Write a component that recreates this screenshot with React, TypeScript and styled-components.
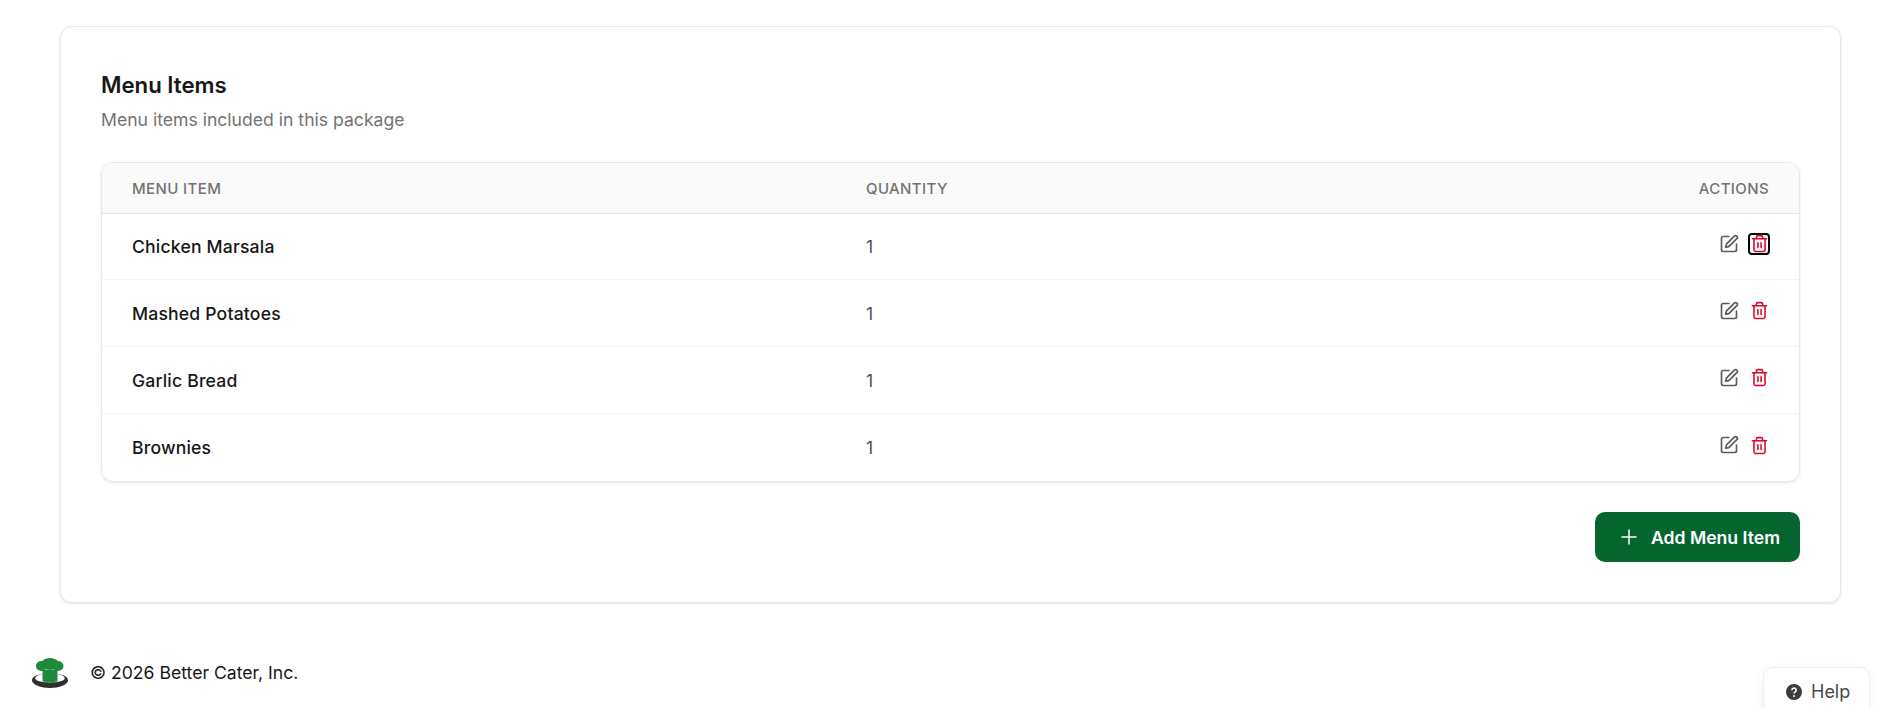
import { Plus, SquarePen, Trash2 } from "lucide-react";
import styled, { createGlobalStyle } from "styled-components";

const GlobalStyle = createGlobalStyle`
  html, body {
    margin: 0;
    height: 100%;
    overflow: hidden;
    background: #ffffff;
    font-family: Inter, "Liberation Sans", sans-serif;
  }
`;

const items = ["Chicken Marsala", "Mashed Potatoes", "Garlic Bread", "Brownies"];

const App = () => {
  return (
    <Page>
      <GlobalStyle />
      <Card>
        <Title>Menu Items</Title>
        <Subtitle>Menu items included in this package</Subtitle>
        <TableBox>
          <HeaderRow>
            <HeadCell>Menu Item</HeadCell>
            <HeadCell>Quantity</HeadCell>
            <HeadCell $right>Actions</HeadCell>
          </HeaderRow>
          {items.map((name, i) => (
            <Row key={name}>
              <NameCell>{name}</NameCell>
              <QtyCell>1</QtyCell>
              <Actions>
                <IconButton $color="#5c5c5c">
                  <SquarePen size={20} strokeWidth={2} />
                </IconButton>
                <IconButton $color="#dc0a2a" $focused={i === 0}>
                  <Trash2 size={19} strokeWidth={2} />
                </IconButton>
              </Actions>
            </Row>
          ))}
        </TableBox>
        <CardFooter>
          <AddButton>
            <Plus size={24} strokeWidth={1.5} />
            Add Menu Item
          </AddButton>
        </CardFooter>
      </Card>
      <Footer>
        <Logo />
        <Copy>© 2026 Better Cater, Inc.</Copy>
      </Footer>
      <Help>
        <HelpIcon viewBox="0 0 16 16">
          <circle cx="8" cy="8" r="8" fill="#3d3d3d" />
          <path d="M5.9 6.2a2.1 2.1 0 1 1 3.3 1.7c-.7.5-1.2.9-1.2 1.7" fill="none" stroke="#fff" strokeWidth="1.6" />
          <circle cx="8" cy="12" r="1" fill="#fff" />
        </HelpIcon>
        Help
      </Help>
    </Page>
  );
};

const Logo = () => (
  <LogoSvg viewBox="0 0 38 30">
    <path d="M1 22.500C1 18.500 6 16.500 12 16 6 17 3.500 19 4.500 21 6 25.500 32 25.500 33.500 21 34.500 19 32 17 26 16 32 16.500 37 18.500 37 22.500 37 26.500 28 30 19 30 10 30 1 26.500 1 22.500Z" fill="#303030" />
    <path d="M11.500 12H26.500V23.500C22 24.500 16 24.500 11.500 23.500Z" fill="#1f8a3d" />
    <ellipse cx="19" cy="6" rx="9" ry="6" fill="#1f8a3d" />
    <ellipse cx="10.500" cy="8" rx="5.500" ry="5" fill="#1f8a3d" />
    <ellipse cx="27" cy="8" rx="5.500" ry="5" fill="#1f8a3d" />
  </LogoSvg>
);

export default App;

const Page = styled.div`
  position: relative;
  height: 708px;
  box-sizing: border-box;
  padding: 26px 60px 0;
  overflow: hidden;
`;

const Card = styled.section`
  box-sizing: border-box;
  height: 577px;
  padding: 40px;
  background: #ffffff;
  border: 1px solid #e8e8e8;
  border-radius: 12px;
  box-shadow: 0 1px 3px rgba(0, 0, 0, 0.1);
`;

const Title = styled.h2`
  margin: 0;
  font-size: 22.2px;
  line-height: 36px;
  font-weight: 600;
  color: #171717;
`;

const Subtitle = styled.p`
  margin: 5px 0 0;
  font-size: 17.6px;
  line-height: 24px;
  color: #737373;
`;

const TableBox = styled.div`
  margin-top: 30px;
  border: 1px solid #e8e8e8;
  border-radius: 12px;
  overflow: hidden;
  box-shadow: 0 1px 3px rgba(0, 0, 0, 0.1);
`;

const HeaderRow = styled.div`
  display: grid;
  grid-template-columns: 734px 1fr auto;
  align-items: center;
  height: 50px;
  margin-bottom: -1px;
  padding: 0 30px;
  background: #fafafa;
  border-bottom: 1px solid #e5e5e5;
`;

const HeadCell = styled.div<{ $right?: boolean }>`
  font-size: 15px;
  font-weight: 450;
  letter-spacing: 0.38px;
  text-transform: uppercase;
  color: #737373;
  text-align: ${(p) => (p.$right ? "right" : "left")};
`;

const Row = styled.div`
  display: grid;
  grid-template-columns: 734px 1fr auto;
  align-items: center;
  height: 67px;
  box-sizing: border-box;
  padding: 0 30px;
  border-bottom: 1px solid #f5f5f5;

  &:last-child {
    border-bottom: none;
  }
`;

const NameCell = styled.div`
  font-size: 17.6px;
  font-weight: 450;
  letter-spacing: 0.18px;
  color: #171717;
`;

const QtyCell = styled.div`
  font-size: 17.6px;
  color: #525252;
`;

const Actions = styled.div`
  display: flex;
  align-items: center;
  gap: 8px;
  margin: -5px -1px 0 0;
`;

const IconButton = styled.button<{ $color: string; $focused?: boolean }>`
  display: flex;
  align-items: center;
  justify-content: center;
  width: 22px;
  height: 22px;
  padding: 0;
  background: none;
  border: 2px solid ${(p) => (p.$focused ? "#000000" : "transparent")};
  border-radius: 4px;
  color: ${(p) => p.$color};

  svg {
    flex: none;
  }
`;

const CardFooter = styled.div`
  display: flex;
  justify-content: flex-end;
  margin-top: 30px;
`;

const AddButton = styled.button`
  display: flex;
  align-items: center;
  gap: 10px;
  height: 50px;
  padding: 0 20px 0 22px;
  background: #06652f;
  border: none;
  border-radius: 10px;
  font-family: inherit;
  font-size: 17.6px;
  font-weight: 600;
  color: #ffffff;
`;

const Footer = styled.footer`
  display: flex;
  align-items: flex-start;
  gap: 21px;
  margin: 55px 0 0 -29px;
`;

const LogoSvg = styled.svg`
  width: 38px;
  height: 30px;
`;

const Copy = styled.span`
  margin-top: 3px;
  font-size: 17.6px;
  line-height: 23px;
  color: #171717;
`;

const Help = styled.div`
  position: absolute;
  left: 1763px;
  top: 667px;
  box-sizing: border-box;
  width: 107px;
  height: 60px;
  padding: 12px 0 0 22px;
  display: flex;
  align-items: flex-start;
  gap: 9px;
  background: #ffffff;
  border: 1px solid #eeeeee;
  border-radius: 10px;
  box-shadow: 0 2px 12px rgba(0, 0, 0, 0.06);
  font-size: 18px;
  line-height: 24px;
  color: #4a4a4a;
`;

const HelpIcon = styled.svg`
  width: 16px;
  height: 16px;
  margin-top: 4px;
`;
